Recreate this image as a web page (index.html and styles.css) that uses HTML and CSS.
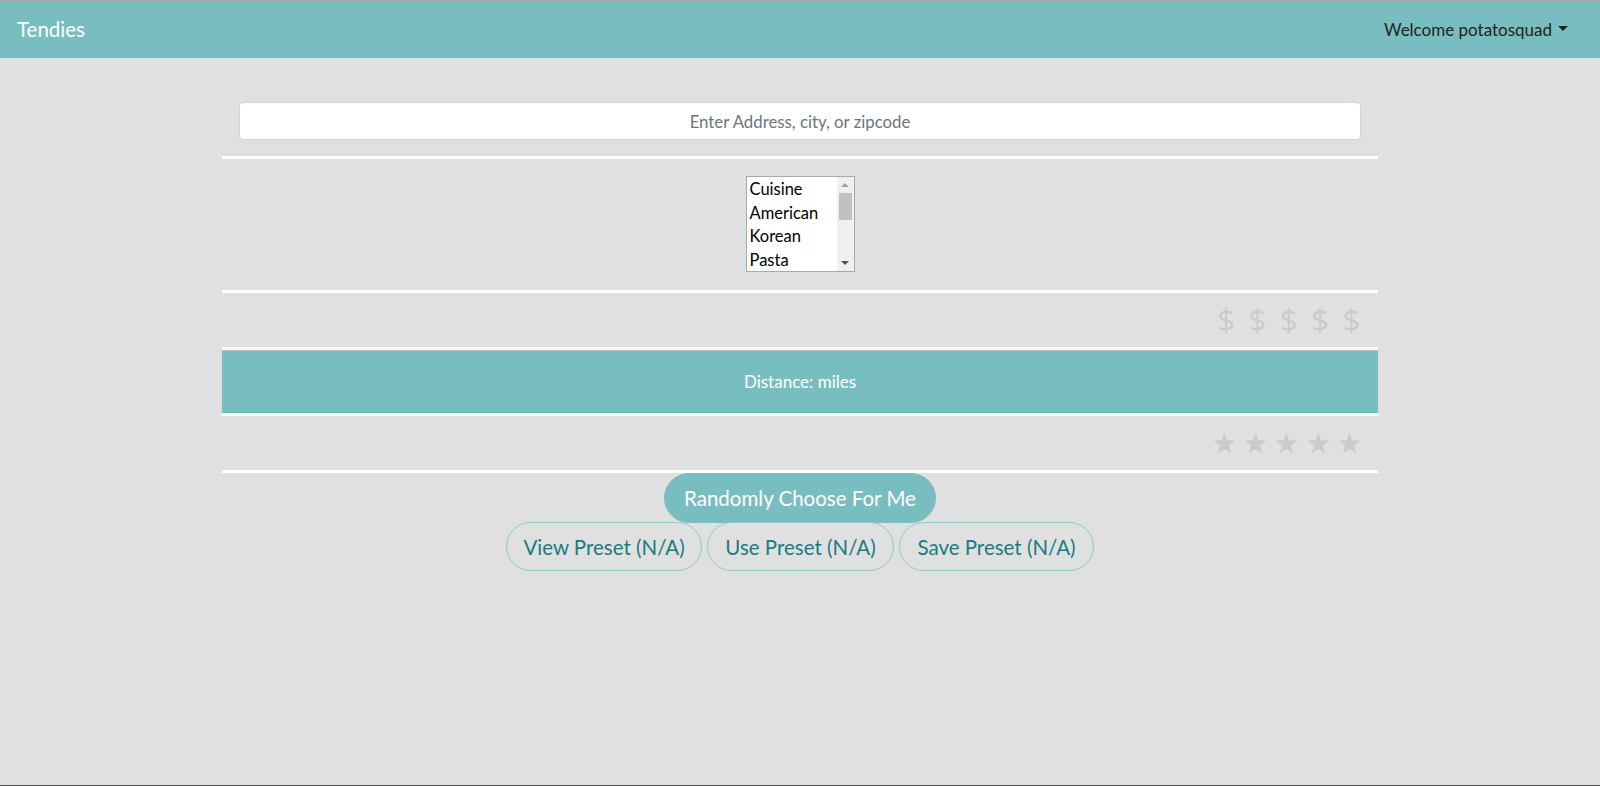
FILE: index.html
```html
<!DOCTYPE html>
<html lang="en">
<head>
<meta charset="utf-8">
<title>Tendies</title>
<link rel="stylesheet" href="styles.css">
</head>
<body>
<header class="navbar">
  <span class="brand">Tendies</span>
  <span class="user">Welcome potatosquad<span class="caret"></span></span>
</header>
<main class="container">
  <section class="search">
    <input class="search-input" type="text" placeholder="Enter Address, city, or zipcode">
  </section>
  <section class="cuisine">
    <div class="listbox">
      <ul class="options">
        <li>Cuisine</li>
        <li>American</li>
        <li>Korean</li>
        <li>Pasta</li>
      </ul>
      <div class="scrollbar">
        <span class="arrow up"></span>
        <span class="thumb"></span>
        <span class="arrow down"></span>
      </div>
    </div>
  </section>
  <section class="price">
    <span>$</span><span>$</span><span>$</span><span>$</span><span>$</span>
  </section>
  <section class="distance">Distance: miles</section>
  <section class="rating">
    <svg class="star" viewBox="0 0 24 24"><polygon points="12,0.8 14.9,8.5 23.2,8.9 16.7,14.1 18.9,22.3 12,17.7 5.1,22.3 7.3,14.1 0.8,8.9 9.1,8.5"/></svg>
    <svg class="star" viewBox="0 0 24 24"><polygon points="12,0.8 14.9,8.5 23.2,8.9 16.7,14.1 18.9,22.3 12,17.7 5.1,22.3 7.3,14.1 0.8,8.9 9.1,8.5"/></svg>
    <svg class="star" viewBox="0 0 24 24"><polygon points="12,0.8 14.9,8.5 23.2,8.9 16.7,14.1 18.9,22.3 12,17.7 5.1,22.3 7.3,14.1 0.8,8.9 9.1,8.5"/></svg>
    <svg class="star" viewBox="0 0 24 24"><polygon points="12,0.8 14.9,8.5 23.2,8.9 16.7,14.1 18.9,22.3 12,17.7 5.1,22.3 7.3,14.1 0.8,8.9 9.1,8.5"/></svg>
    <svg class="star" viewBox="0 0 24 24"><polygon points="12,0.8 14.9,8.5 23.2,8.9 16.7,14.1 18.9,22.3 12,17.7 5.1,22.3 7.3,14.1 0.8,8.9 9.1,8.5"/></svg>
  </section>
  <div class="actions">
    <button class="btn btn-primary">Randomly Choose For Me</button>
    <div class="preset-row">
      <button class="btn btn-outline">View Preset (N/A)</button>
      <button class="btn btn-outline">Use Preset (N/A)</button>
      <button class="btn btn-outline">Save Preset (N/A)</button>
    </div>
  </div>
</main>
</body>
</html>
```
FILE: styles.css
```css
* { box-sizing: border-box; }

html, body { margin: 0; padding: 0; }

body {
  min-height: 100vh;
  background: #e0e0e0;
  border-top: 1px solid #a4a4a4;
  border-bottom: 1px solid #4a4a4a;
  font-family: Lato, "Open Sans", sans-serif;
  color: #212529;
}

.navbar {
  height: 57px;
  background: #78bec1;
  display: flex;
  align-items: center;
  justify-content: space-between;
  padding: 0 32px 0 17px;
}

.brand {
  color: #ffffff;
  font-size: 20.5px;
  margin-top: -1px;
}

.user {
  font-size: 17px;
  color: #222;
  display: flex;
  align-items: center;
  margin-top: -1px;
}

.caret {
  width: 0;
  height: 0;
  border-left: 5px solid transparent;
  border-right: 5px solid transparent;
  border-top: 5px solid #222;
  margin-left: 6px;
  margin-top: -1px;
}

.container {
  width: 1156px;
  margin: 0 auto;
}

.search {
  padding: 44px 17px 16px;
  border-bottom: 3px solid #ffffff;
}

.search-input {
  display: block;
  width: 100%;
  height: 38px;
  border: 1px solid #ced4da;
  border-radius: 4px;
  background: #ffffff;
  text-align: center;
  font-family: inherit;
  font-size: 16.8px;
  color: #495057;
  outline: none;
}

.search-input::placeholder { color: #6c757d; }

.cuisine {
  padding: 17px 0 18px;
  border-bottom: 3px solid #ffffff;
  display: flex;
  justify-content: center;
}

.listbox {
  width: 109px;
  height: 96px;
  border: 1px solid #a9a9a9;
  background: #ffffff;
  display: flex;
}

.options {
  list-style: none;
  margin: 0;
  padding: 1px 0 0 3px;
  flex: 1;
  font-size: 16.5px;
  color: #000;
}

.options li {
  height: 23.5px;
  line-height: 23.5px;
}

.scrollbar {
  width: 17px;
  background: #f0f0f0;
  display: flex;
  flex-direction: column;
  align-items: center;
}

.arrow {
  width: 0;
  height: 0;
  border-left: 4px solid transparent;
  border-right: 4px solid transparent;
}

.arrow.up {
  border-bottom: 4px solid #a3a3a3;
  margin-top: 6px;
}

.arrow.down {
  border-top: 4px solid #505050;
  margin-top: auto;
  margin-bottom: 6px;
}

.thumb {
  width: 13px;
  height: 27px;
  background: #c1c1c1;
  margin-top: 6px;
}

.price {
  height: 57px;
  display: flex;
  justify-content: flex-end;
  align-items: center;
  padding-right: 17px;
  gap: 12px;
  border-bottom: 3px solid #ffffff;
  font-family: "Open Sans", sans-serif;
  font-size: 31px;
  color: #cbcbcb;
}

.price span {
  width: 19.3px;
  text-align: center;
  line-height: 1;
  margin-top: -1px;
}

.distance {
  height: 66px;
  background: #78bec1;
  border-top: 1px solid #bcbcbc;
  border-bottom: 3px solid #ffffff;
  box-shadow: inset 0 -1px 0 #6ab7ba;
  display: flex;
  align-items: center;
  justify-content: center;
  color: #ffffff;
  font-size: 17px;
  padding-bottom: 1px;
}

.rating {
  height: 57px;
  display: flex;
  justify-content: flex-end;
  align-items: center;
  gap: 8.3px;
  padding-right: 17px;
  border-bottom: 3px solid #ffffff;
}

.star {
  width: 23px;
  height: 23px;
  fill: #cbcbcb;
}

.actions {
  display: flex;
  flex-direction: column;
  align-items: center;
}

.btn {
  font-family: inherit;
  font-size: 20.5px;
  border-radius: 25px;
  cursor: pointer;
  white-space: nowrap;
}

.btn-primary {
  height: 50px;
  width: 272px;
  background: #78bec1;
  border: 1px solid #78bec1;
  color: #ffffff;
  padding: 0;
}

.preset-row {
  display: flex;
  gap: 5px;
  margin-top: -1px;
}

.btn-outline {
  height: 49px;
  background: transparent;
  border: 1px solid #8ccbcd;
  color: #177c81;
  padding: 0;
}

.btn-outline:nth-child(1) { width: 196px; }
.btn-outline:nth-child(2) { width: 187px; }
.btn-outline:nth-child(3) { width: 195px; }
```
